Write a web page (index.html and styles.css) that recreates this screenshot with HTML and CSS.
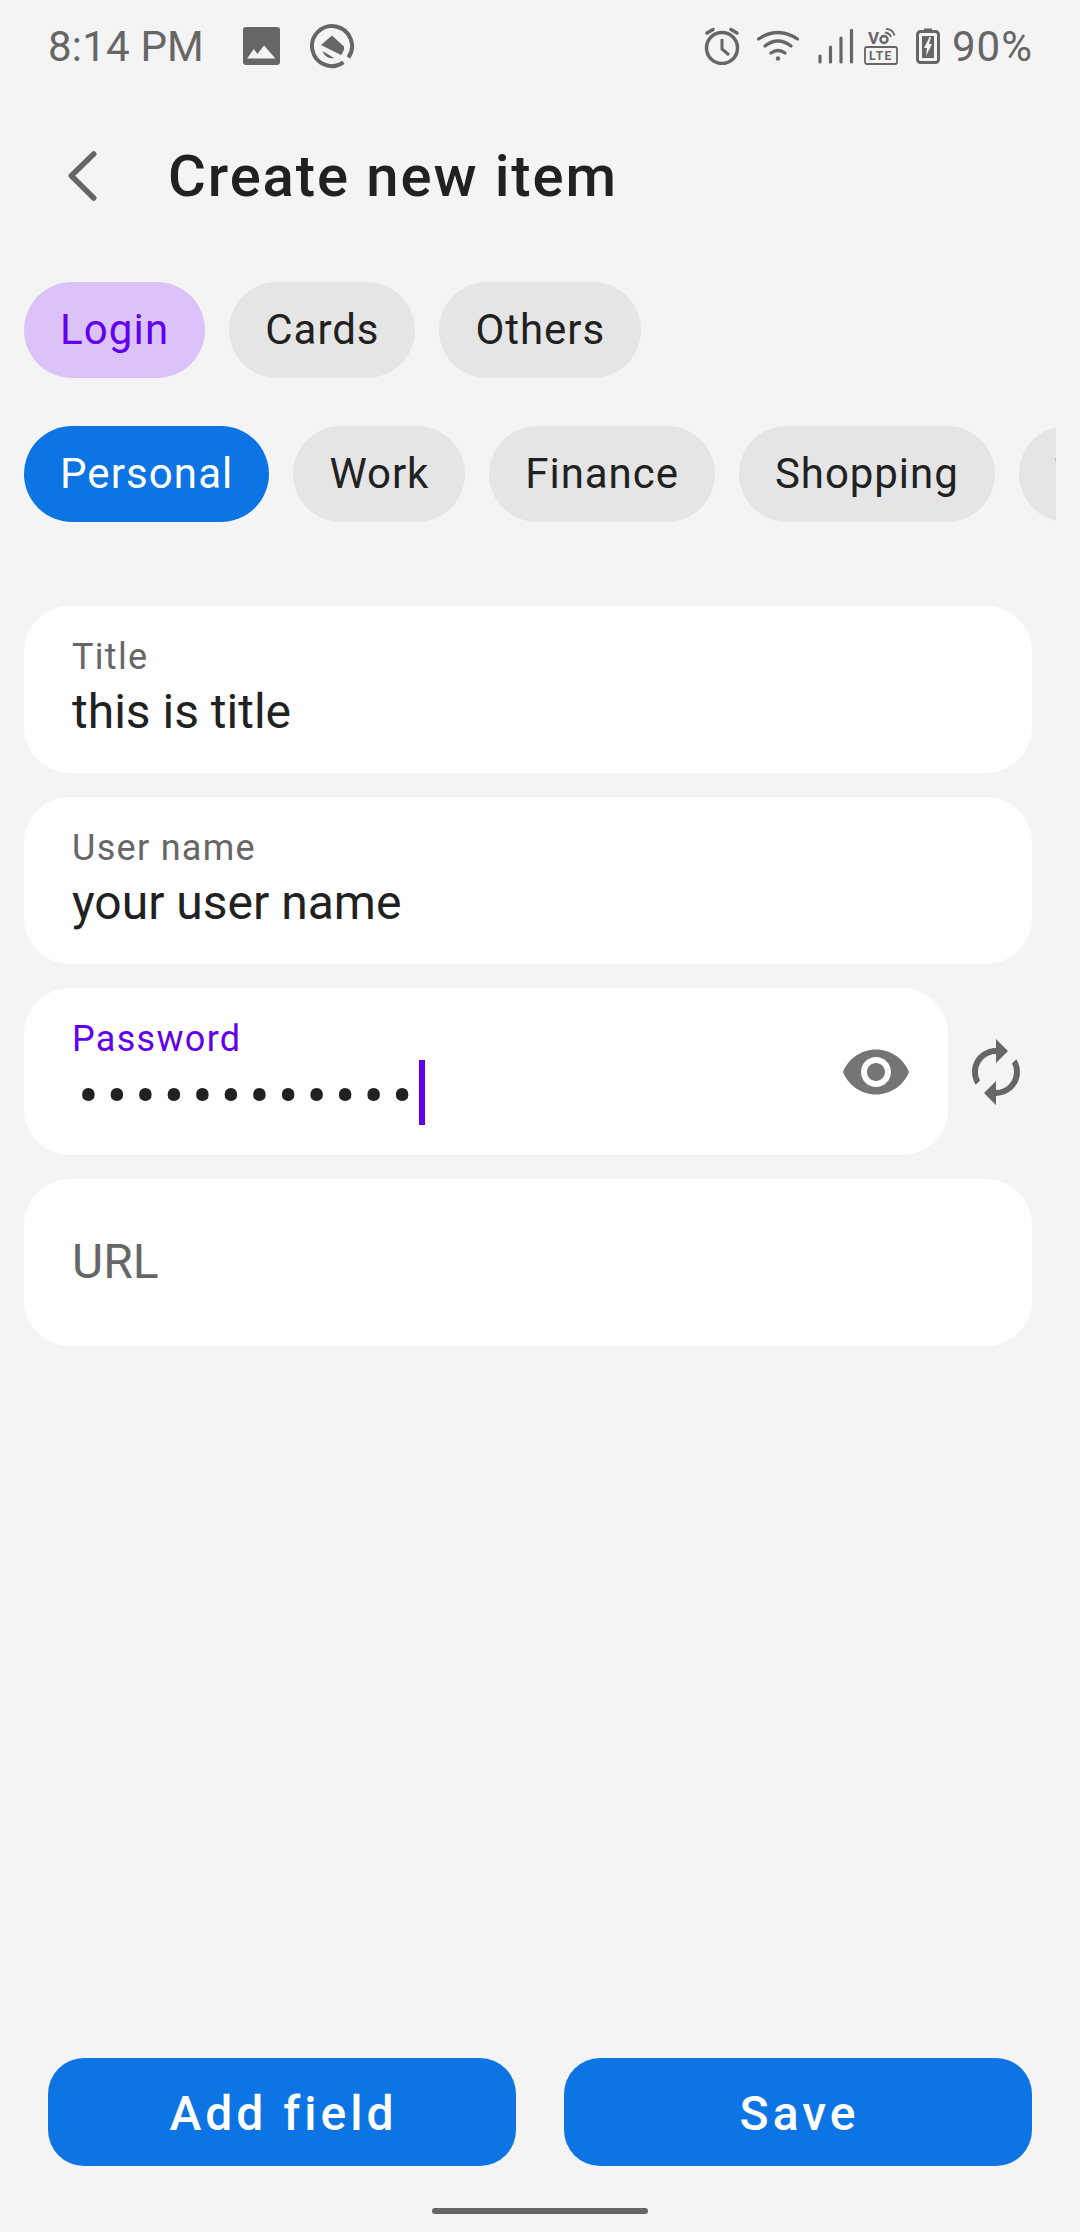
FILE: index.html
```html
<!DOCTYPE html>
<html lang="en">
<head>
<meta charset="utf-8">
<title>Create new item</title>
<link rel="stylesheet" href="styles.css">
</head>
<body>
<div class="screen">
  <div class="status">
    <div class="status-left">
      <span class="time">8:14 PM</span>
      <svg class="ic-pic" width="37" height="38" viewBox="0 0 36 38" preserveAspectRatio="none"><rect x="0" y="0" width="36" height="38" rx="3" fill="#666"/><path d="M4 31.500 L10.500 22 L14 27 L20.500 18.500 L31.500 31.500 Z" fill="#f4f4f4"/></svg>
      <svg class="ic-q" width="46" height="46" viewBox="0 0 46 46"><path d="M39.400 34.500 A20 20 0 1 0 34.500 39.400" fill="none" stroke="#666" stroke-width="4"/><path d="M23 12.500 L35 23.500 Q35.500 28 32 32 L12 22 Z" fill="#666"/><path d="M13.500 28 L25 35 Q16.500 36.500 13.500 28 Z" fill="#666"/></svg>
    </div>
    <div class="status-right">
      <svg class="ic-alarm" width="38" height="38" viewBox="0 0 38 38"><circle cx="18" cy="21" r="15.500" fill="none" stroke="#666" stroke-width="3.500"/><path d="M18 12 V22 L25 28" fill="none" stroke="#666" stroke-width="3"/><path d="M3 6 L9 2.500 M27 2.500 L33 6" stroke="#666" stroke-width="3.500" stroke-linecap="round" fill="none"/></svg>
      <svg class="ic-wifi" width="42" height="32" viewBox="0 0 42 32"><path d="M1.500 9 Q21 -4 40.500 9 M8 16 Q21 6 34 16 M14 23 Q21 18 28 23" fill="none" stroke="#666" stroke-width="3.200" stroke-linecap="round"/><circle cx="21" cy="28.500" r="2.200" fill="#666"/></svg>
      <svg class="ic-signal" width="37" height="35" viewBox="0 0 37 35"><path d="M3 33 V27 M13.500 33 V18 M24 33 V9 M34.500 33 V1.500" stroke="#666" stroke-width="3.200" stroke-linecap="round" fill="none"/></svg>
      <svg class="ic-volte" width="34" height="37" viewBox="0 0 34 37"><text class="vo" x="4" y="15.500">V</text><circle cx="20" cy="11.500" r="3.500" fill="none" stroke="#666" stroke-width="2.400"/><path d="M21 4.500 Q25.500 5 27 9 M22 0.800 Q29 1.500 30.500 7.500" fill="none" stroke="#666" stroke-width="1.800"/><rect x="1" y="19" width="32" height="17" rx="2" fill="none" stroke="#666" stroke-width="1.800"/><text class="lte" x="5" y="32">LTE</text></svg>
      <svg class="ic-batt" width="24" height="36" viewBox="0 0 24 36"><path d="M8 2 H16" stroke="#666" stroke-width="3"/><rect x="1.500" y="3.500" width="21" height="31" rx="3" fill="none" stroke="#666" stroke-width="3"/><rect x="6" y="8" width="12" height="22" fill="#666"/><path d="M13.500 9 L8 20 H11 L10 28 L16 16 H13 L15 9 Z" fill="#f4f4f4"/></svg>
      <span class="pct">90%</span>
    </div>
  </div>

  <div class="header">
    <svg class="back" width="32" height="52" viewBox="0 0 32 52"><path d="M26.700 4 L4.300 25.700 L26.700 48" fill="none" stroke="#666" stroke-width="5.500" stroke-linecap="round" stroke-linejoin="round"/></svg>
    <h1 class="title">Create new item</h1>
  </div>

  <div class="chips chips-type">
    <span class="chip chip-lilac">Login</span>
    <span class="chip">Cards</span>
    <span class="chip">Others</span>
  </div>
  <div class="chips chips-cat">
    <span class="chip chip-blue">Personal</span>
    <span class="chip">Work</span>
    <span class="chip">Finance</span>
    <span class="chip">Shopping</span>
    <span class="chip">Travel</span>
  </div>

  <div class="fields">
    <div class="field">
      <div class="label">Title</div>
      <div class="value">this is title</div>
    </div>
    <div class="field">
      <div class="label">User name</div>
      <div class="value">your user name</div>
    </div>
    <div class="pw-row">
      <div class="field field-pw">
        <div class="pw-main">
          <div class="label label-active">Password</div>
          <div class="value-pw"><span class="dots">••••••••••••</span><span class="caret"></span></div>
        </div>
        <svg class="eye" width="72" height="72" viewBox="0 0 24 24"><path fill="#757575" d="M12 4.500C7 4.500 2.730 7.610 1 12c1.730 4.390 6 7.500 11 7.500s9.270-3.110 11-7.500c-1.730-4.390-6-7.500-11-7.500zM12 17c-2.760 0-5-2.240-5-5s2.240-5 5-5 5 2.240 5 5-2.240 5-5 5zm0-8c-1.660 0-3 1.340-3 3s1.340 3 3 3 3-1.340 3-3-1.340-3-3-3z"/></svg>
      </div>
      <svg class="sync" width="72" height="72" viewBox="0 0 24 24"><path fill="#666" d="M12 4V1L8 5l4 4V6c3.310 0 6 2.690 6 6 0 1.010-.25 1.970-.7 2.800l1.460 1.460C19.540 15.030 20 13.570 20 12c0-4.420-3.580-8-8-8zm0 14c-3.310 0-6-2.690-6-6 0-1.010.25-1.970.7-2.800L5.240 7.740C4.460 8.970 4 10.430 4 12c0 4.420 3.580 8 8 8v3l4-4-4-4v3z"/></svg>
    </div>
    <div class="field field-empty">
      <div class="placeholder">URL</div>
    </div>
  </div>

  <div class="actions">
    <button class="btn">Add field</button>
    <button class="btn">Save</button>
  </div>
  <div class="nav"><span class="home"></span></div>
</div>
</body>
</html>
```

FILE: styles.css
```css
* { box-sizing: border-box; }
html, body { margin: 0; padding: 0; }
body { background: #f4f4f4; font-family: Roboto, "Noto Sans", sans-serif; }
.screen { width: 1080px; height: 2232px; display: flex; flex-direction: column; background: #f4f4f4; overflow: hidden; }

.status { height: 90px; padding: 2px 47px 0 48px; display: flex; justify-content: space-between; align-items: center; color: #666; font-size: 42px; }
.status-left, .status-right { display: flex; align-items: center; }
.time { margin-right: 39px; letter-spacing: 0.2px; }
.ic-q { margin-left: 29px; }
.ic-wifi { margin-left: 15px; }
.ic-signal { margin-left: 18px; }
.ic-volte { margin-left: 10px; }
.ic-batt { margin-left: 18px; }
.pct { margin-left: 12px; letter-spacing: 1px; }
.vo { font: 700 17px Roboto, sans-serif; fill: #666; }
.lte { font: 700 12px Roboto, sans-serif; fill: #666; letter-spacing: 1.5px; }

.header { height: 170px; display: flex; align-items: center; padding: 2px 0 0 67px; }
.back { margin-right: 69px; }
.title { margin: 0; font-size: 58px; font-weight: 500; color: #212121; letter-spacing: 1.9px; }

.chips { display: flex; gap: 24px; }
.chips-type { margin: 22px 0 0 24px; }
.chips-cat { margin: 48px 24px 0 24px; overflow: hidden; }
.chip { flex: none; height: 96px; padding: 0 36px; border-radius: 48px; background: #e5e5e5; color: #212121; font-size: 42px; line-height: 96px; letter-spacing: 0.95px; }
.chip-lilac { background: #dbc2f9; color: #6200ee; letter-spacing: 1.15px; }
.chip-blue { background: #0d74e4; color: #fff; letter-spacing: 1.1px; }

.fields { margin: 84px 48px 0 24px; display: flex; flex-direction: column; gap: 24px; }
.field { height: 167px; background: #fff; border-radius: 46px; padding: 30px 48px 0; }
.label { font-size: 36px; line-height: 42px; color: #666; letter-spacing: 1.3px; }
.label-active { color: #6200ee; }
.value { font-size: 48px; line-height: 60px; margin-top: 4px; color: #212121; }
.pw-row { display: flex; align-items: center; justify-content: space-between; }
.field-pw { width: 924px; display: flex; justify-content: space-between; padding: 0 36px 0 48px; }
.pw-main { padding-top: 30px; }
.value-pw { display: flex; align-items: center; height: 65px; }
.dots { font-size: 62px; line-height: 65px; margin-top: 5px; padding-left: 6px; color: #212121; letter-spacing: 7.6px; }
.caret { width: 6px; height: 65px; margin-left: -1px; background: #6200ee; flex: none; }
.eye { flex: none; align-self: center; }
.sync { flex: none; transform: scaleX(-1); }
.field-empty { display: flex; align-items: center; padding-top: 0; }
.placeholder { font-size: 48px; color: #666; margin-top: -2px; }

.actions { margin: auto 48px 0; display: flex; gap: 48px; }
.btn { flex: 1; height: 108px; border: 0; border-radius: 36px; background: #0d74e4; color: #fff; font: 500 48px Roboto, sans-serif; letter-spacing: 4px; padding: 2px 0 0 3px; }
.nav { height: 66px; display: flex; justify-content: center; padding-top: 42px; }
.home { width: 216px; height: 6px; border-radius: 3px; background: #666; }
```
